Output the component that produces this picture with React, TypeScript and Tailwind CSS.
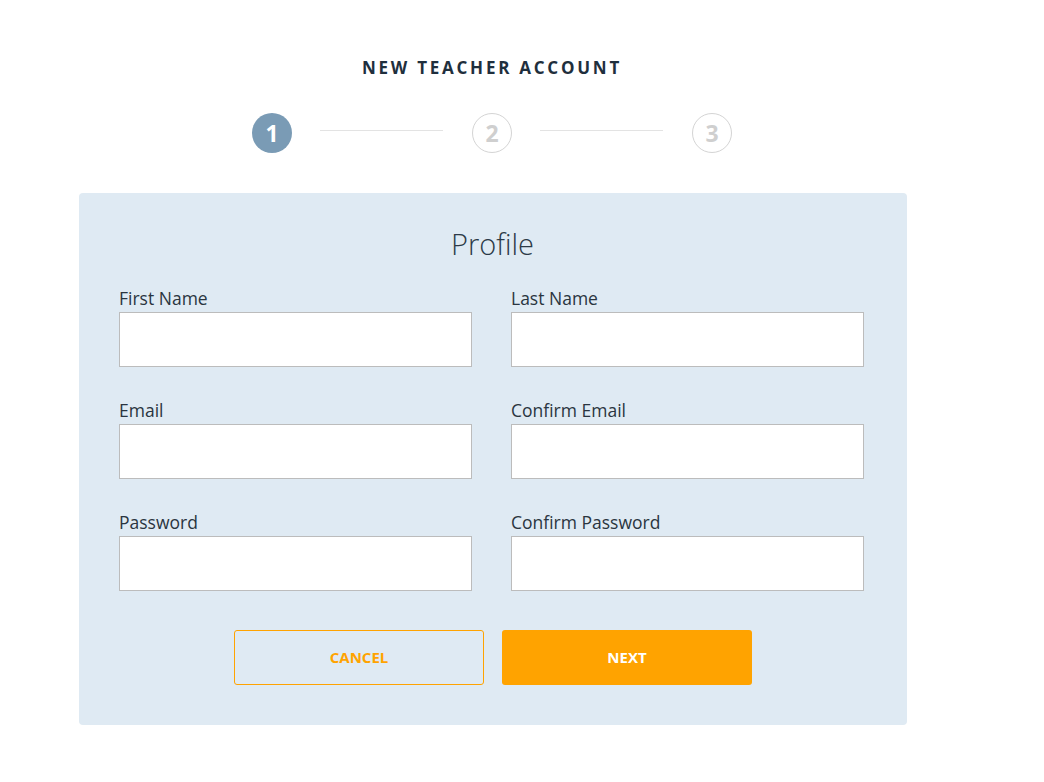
const fields = [
  ["First Name", "Last Name"],
  ["Email", "Confirm Email"],
  ["Password", "Confirm Password"],
];

const Step = ({ n, active }: { n: number; active?: boolean }) => (
  <div
    className={`w-10 h-10 rounded-full flex items-center justify-center text-[23px] font-bold ${
      active ? "bg-[#7a9bb5] text-white" : "border border-[#d4d4d4] text-[#cfcfcf] bg-white"
    }`}
  >
    {n}
  </div>
);

export default function App() {
  return (
    <div className="min-h-screen bg-white font-['Open_Sans',sans-serif]">
      <div className="w-[828px] ml-[79px] pt-[56px] pb-10">
        <h1 className="text-center text-[17px] leading-6 font-bold tracking-[0.162em] text-[#1f2f3d] mr-[2px]">
          NEW TEACHER ACCOUNT
        </h1>

        {/* steps */}
        <div className="flex items-center justify-center mt-[33px] mr-[2px]">
          <Step n={1} active />
          <div className="w-[123px] h-px bg-[#e3e3e3] ml-7 mr-[29px] -mt-[5px]" />
          <Step n={2} />
          <div className="w-[123px] h-px bg-[#e3e3e3] ml-7 mr-[29px] -mt-[5px]" />
          <Step n={3} />
        </div>

        <div className="mt-10 bg-[#dfeaf3] rounded-[4px] pt-8 pb-10 pl-10 pr-[43px]">
          <h2 className="text-center text-[29px] leading-[38px] font-light text-[#2c3a47] pl-[2px]">Profile</h2>

          <div className="mt-6 flex flex-col gap-8">
            {fields.map((row) => (
              <div key={row[0]} className="grid grid-cols-2 gap-x-[39px]">
                {row.map((label) => (
                  <div key={label}>
                    <label className="block text-[17.5px] leading-[22px] text-[#2a3540]">{label}</label>
                    <input
                      type={label.includes("Password") ? "password" : "text"}
                      className="mt-[3px] w-full h-[55px] bg-white border border-[#bcbcbc] outline-none px-3"
                    />
                  </div>
                ))}
              </div>
            ))}
          </div>

          <div className="mt-[39px] flex justify-center gap-[18px] pl-[3px]">
            <button className="w-[250px] h-[55px] rounded-[3px] border border-[#ffa300] text-[#ffa300] text-[15px] font-bold">
              CANCEL
            </button>
            <button className="w-[250px] h-[55px] rounded-[3px] bg-[#ffa300] text-white text-[15px] font-bold">
              NEXT
            </button>
          </div>
        </div>
      </div>
    </div>
  );
}
